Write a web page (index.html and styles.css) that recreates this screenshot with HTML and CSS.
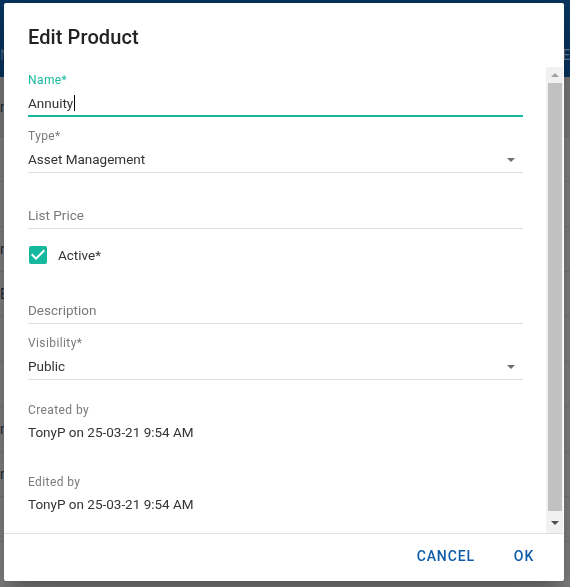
FILE: index.html
```html
<!DOCTYPE html>
<html>
<head>
<meta charset="utf-8">
<link rel="stylesheet" href="styles.css">
</head>
<body>
<div class="page">
  <div class="page-header"><span class="hdr-l">N</span><span class="hdr-r">E</span></div>
  <div class="page-rows">
    <div class="row shade"><span>m</span></div>
    <div class="row"><span></span></div>
    <div class="row"><span></span></div>
    <div class="row"><span>r</span></div>
    <div class="row"><span>E</span></div>
    <div class="row"><span></span></div>
    <div class="row"><span></span></div>
    <div class="row"><span>n</span></div>
    <div class="row"><span>n</span></div>
    <div class="row"><span></span></div>
  </div>
</div>

<div class="dialog">
  <h2 class="dialog-title">Edit Product</h2>
  <div class="dialog-body">
    <div class="content">
      <div class="field field-name">
        <div class="label label-focus">Name*</div>
        <div class="input input-focus">Annuity<span class="caret"></span></div>
      </div>
      <div class="field field-type">
        <div class="label">Type*</div>
        <div class="input select">Asset Management<span class="arrow"></span></div>
      </div>
      <div class="field field-price">
        <div class="input placeholder">List Price</div>
      </div>
      <label class="check-row">
        <svg class="checkbox" width="18" height="18" viewBox="3 3 18 18">
          <rect x="3" y="3" width="18" height="18" rx="2" fill="#17b99e"/>
          <path d="M10 17l-5-5 1.41-1.41L10 14.17l7.59-7.59L19 8l-9 9z" fill="#ffffff"/>
        </svg>
        <span class="check-label">Active*</span>
      </label>
      <div class="field field-desc">
        <div class="input placeholder">Description</div>
      </div>
      <div class="field field-vis">
        <div class="label">Visibility*</div>
        <div class="input select">Public<span class="arrow"></span></div>
      </div>
      <div class="info info-created">
        <div class="label">Created by</div>
        <div class="info-value">TonyP on 25-03-21 9:54 AM</div>
      </div>
      <div class="info info-edited">
        <div class="label">Edited by</div>
        <div class="info-value">TonyP on 25-03-21 9:54 AM</div>
      </div>
    </div>
    <div class="scrollbar">
      <div class="sb-btn"><span class="sb-up"></span></div>
      <div class="sb-track"><div class="sb-thumb"></div></div>
      <div class="sb-btn"><span class="sb-down"></span></div>
    </div>
  </div>
  <div class="dialog-actions">
    <button class="btn">Cancel</button>
    <button class="btn">OK</button>
  </div>
</div>
</body>
</html>
```

FILE: styles.css
```css
* { box-sizing: border-box; }

html, body {
  margin: 0;
  padding: 0;
  height: 100%;
  overflow: hidden;
}

body {
  font-family: Roboto, "Liberation Sans", Arial, sans-serif;
  background: #848484;
}

/* dimmed page behind the dialog */
.page {
  height: 100%;
  display: flex;
  flex-direction: column;
}

.page-header {
  height: 77px;
  background: #07345f;
  display: flex;
  justify-content: space-between;
  align-items: flex-end;
  padding: 0 0 14px 0;
  color: #4b6684;
  font-size: 14px;
}

.hdr-l { margin-left: 0; }
.hdr-r { margin-right: 0; color: #6f8196; }

.page-rows {
  flex: 1;
  display: flex;
  flex-direction: column;
  background: #838383;
}

.row {
  height: 45px;
  border-bottom: 1px solid #777777;
  display: flex;
  align-items: center;
  font-size: 14px;
  color: #1e2b3a;
}

.row.shade {
  height: 60px;
  background: #7c7c7c;
}

/* dialog */
.dialog {
  position: fixed;
  left: 4px;
  top: 3px;
  width: 560px;
  height: 578px;
  background: #ffffff;
  border-radius: 2px;
  box-shadow: 0 11px 15px -7px rgba(0,0,0,0.2), 0 24px 38px 3px rgba(0,0,0,0.14), 0 9px 46px 8px rgba(0,0,0,0.12);
  display: flex;
  flex-direction: column;
  overflow: hidden;
}

.dialog-title {
  margin: 0;
  height: 64px;
  padding: 18px 24px 14px;
  font-size: 20px;
  line-height: 32px;
  font-weight: 500;
  color: #222222;
  letter-spacing: 0.1px;
}

.dialog-body {
  height: 466px;
  display: flex;
  overflow: hidden;
}

.content {
  flex: 1;
  padding: 5px 23px 0 24px;
  overflow: hidden;
}

.label {
  font-size: 12px;
  line-height: 16px;
  letter-spacing: 0.4px;
  color: #7a7a7a;
}

.label-focus { color: #17b99e; }

.input {
  position: relative;
  font-size: 13.5px;
  line-height: 20px;
  color: #333333;
  padding-bottom: 3px;
  border-bottom: 1px solid #dedede;
}

.field .label + .input { margin-top: 5px; }

.input-focus {
  padding-bottom: 2px;
  border-bottom: 2px solid #17b99e;
}

.caret {
  display: inline-block;
  width: 1px;
  height: 16px;
  background: #000;
  vertical-align: -3px;
  margin-left: 1px;
}

.select .arrow {
  position: absolute;
  right: 8px;
  top: 9px;
  width: 0;
  height: 0;
  border-left: 4px solid transparent;
  border-right: 4px solid transparent;
  border-top: 4px solid #6e6e6e;
}

.placeholder { color: #7a7a7a; }

.field-type { margin-top: 11px; }
.field-price { margin-top: 32px; }
.field-desc { margin-top: 36px; }
.field-vis { margin-top: 11px; }

.check-row {
  margin-top: 17px;
  height: 18px;
  display: flex;
  align-items: center;
  gap: 11px;
  padding-left: 1px;
}

.checkbox { display: block; flex: none; }

.check-label {
  font-size: 13.5px;
  line-height: 20px;
  color: #333333;
}

.info-created { margin-top: 22px; }
.info-edited { margin-top: 32px; }

.info-value {
  margin-top: 4px;
  font-size: 13.5px;
  line-height: 20px;
  color: #333333;
}

/* scrollbar */
.scrollbar {
  width: 17px;
  margin-right: 1px;
  background: #f1f1f1;
  display: flex;
  flex-direction: column;
  padding-bottom: 2px;
}

.sb-btn {
  height: 16px;
  display: flex;
  align-items: center;
  justify-content: center;
  flex: none;
}

.sb-up {
  width: 0;
  height: 0;
  border-left: 4px solid transparent;
  border-right: 4px solid transparent;
  border-bottom: 4px solid #a3a3a3;
}

.sb-down {
  width: 0;
  height: 0;
  border-left: 4px solid transparent;
  border-right: 4px solid transparent;
  border-top: 4px solid #505050;
}

.sb-track {
  flex: 1;
  padding: 0 1px 0 2px;
}

.sb-thumb {
  height: 428px;
  background: #c1c1c1;
}

/* actions */
.dialog-actions {
  flex: none;
  height: 48px;
  border-top: 1px solid #e0e0e0;
  display: flex;
  justify-content: flex-end;
  align-items: flex-start;
  padding: 4px 8px 7px;
  gap: 9px;
}

.btn {
  min-width: 64px;
  height: 36px;
  padding: 6px 8px;
  border: none;
  background: transparent;
  font-family: Roboto, "Liberation Sans", Arial, sans-serif;
  font-size: 14px;
  line-height: 24px;
  font-weight: 500;
  letter-spacing: 0.9px;
  text-transform: uppercase;
  color: #0e5ca8;
  border-radius: 4px;
  cursor: pointer;
}
```
